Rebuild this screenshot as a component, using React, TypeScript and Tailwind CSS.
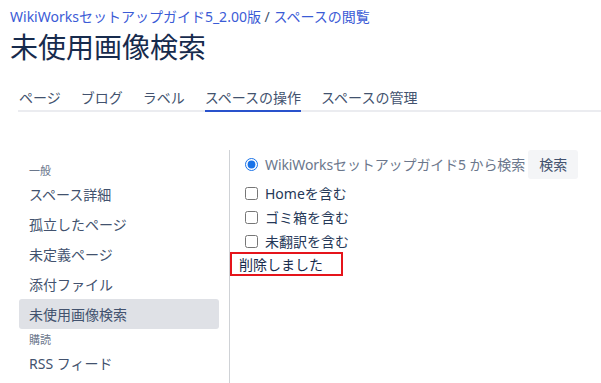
const tabs = ["ページ", "ブログ", "ラベル", "スペースの操作", "スペースの管理"];

const SideItem = ({ label, active }: { label: string; active?: boolean }) => (
  <div
    className={`flex h-[30px] items-center rounded-[3px] px-[10px] text-[14px] text-[#42526e] ${
      active ? "bg-[#dfe1e6]" : ""
    }`}
  >
    {label}
  </div>
);

const CheckRow = ({ label }: { label: string }) => (
  <label className="flex h-[24px] items-center gap-[7px] text-[14px] text-[#253858]">
    <input type="checkbox" className="m-0 h-[13px] w-[13px]" />
    {label}
  </label>
);

export default function App() {
  return (
    <div
      className="h-[383px] w-[601px] overflow-hidden bg-white"
      style={{ fontFamily: '"Noto Sans", "Noto Sans CJK JP", sans-serif' }}
    >
      <div className="px-[10px] pt-[8px]">
        <div className="text-[14px] leading-[18px] text-[#3b5bd6]">
          WikiWorksセットアップガイド5_2.00版 <span className="text-[#42526e]">/</span> スペースの閲覧
        </div>
        <h1 className="mt-[5px] text-[28px] leading-[32px] text-[#172b4d]">未使用画像検索</h1>
      </div>

      <div className="ml-[18px] mt-[25px] flex gap-[20px] border-b-2 border-[#ebecf0] pl-[1px]">
        {tabs.map((t, i) => (
          <div
            key={t}
            className={`-mb-[2px] pb-[2px] text-[14px] leading-[20px] text-[#42526e] ${
              i === 3 ? "border-b-2 border-[#2952cc]" : "border-b-2 border-transparent"
            }`}
          >
            {t}
          </div>
        ))}
      </div>

      <div className="mt-[38px] flex">
        <div className="ml-[19px] w-[200px] pt-[14px]">
          <div className="h-[14px] px-[10px] text-[11px] leading-[14px] text-[#6b778c]">一般</div>
          <div className="mt-[1px]">
            <SideItem label="スペース詳細" />
            <SideItem label="孤立したページ" />
            <SideItem label="未定義ページ" />
            <SideItem label="添付ファイル" />
            <SideItem label="未使用画像検索" active />
          </div>
          <div className="mt-[4px] h-[14px] px-[10px] text-[11px] leading-[14px] text-[#6b778c]">購読</div>
          <div className="mt-[1px]">
            <SideItem label="RSS フィード" />
          </div>
        </div>

        <div className="ml-[10px] h-[240px] flex-1 border-l border-[#cfd2d6]">
          <div className="flex h-[29px] items-center pl-[15px]">
            <input
              type="radio"
              defaultChecked
              className="m-0 h-[13px] w-[13px] accent-[#1a73e8]"
            />
            <span className="ml-[7px] text-[14px] tracking-[-0.1px] text-[#6b778c]">
              WikiWorksセットアップガイド5 から検索
            </span>
            <button className="ml-[3px] h-[29px] rounded-[3px] bg-[#f4f5f7] px-[11px] text-[14px] text-[#42526e]">
              検索
            </button>
          </div>
          <div className="mt-[2px] pl-[15px]">
            <CheckRow label="Homeを含む" />
            <CheckRow label="ゴミ箱を含む" />
            <CheckRow label="未翻訳を含む" />
          </div>
          <div className="-mt-[1px] flex h-[24px] w-[113px] items-center border-2 border-[#e5141b] pl-[7px] text-[14px] text-[#172b4d]">
            削除しました
          </div>
        </div>
      </div>
    </div>
  );
}
